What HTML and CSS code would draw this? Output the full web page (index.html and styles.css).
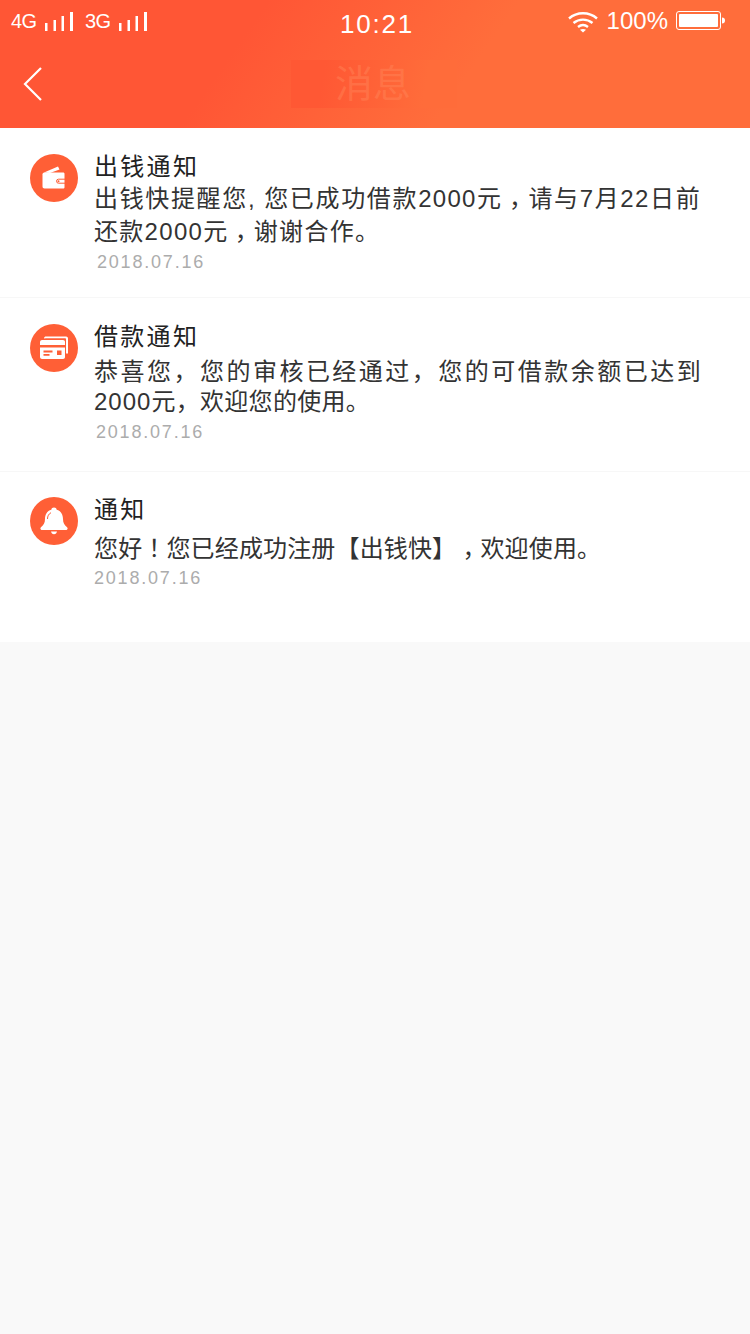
FILE: index.html
```html
<!DOCTYPE html>
<html lang="zh">
<head>
<meta charset="utf-8">
<title>消息</title>
<link rel="stylesheet" href="styles.css">
</head>
<body>
<header class="header">
  <div class="status">
    <div class="status-left">
      <span class="net net-4g">4G</span>
      <svg class="bars" width="30" height="20" viewBox="0 0 30 20"><path d="M1 12h2.500v8H1zM9.500 9H12v11H9.500zM17.500 5H20v15h-2.500zM26 1h3v19h-3z" fill="#fff"/></svg>
      <span class="net net-3g">3G</span>
      <svg class="bars" width="30" height="20" viewBox="0 0 30 20"><path d="M1 12h2.500v8H1zM9.500 9H12v11H9.500zM17.500 5H20v15h-2.500zM26 1h3v19h-3z" fill="#fff"/></svg>
    </div>
    <div class="clock">10:21</div>
    <div class="status-right">
      <svg class="wifi" width="30" height="22" viewBox="0 0 30 22" fill="none" stroke="#fff" stroke-width="2.400"><path d="M1 7.500C9 .5 21 .5 29 7.500"/><path d="M5.500 12C11 7.500 19 7.500 24.500 12"/><path d="M10 16c3-2.300 7-2.300 10 0"/><path d="M12 18.800 15 21.500l3-2.700c-1.800-1-4.200-1-6 0z" fill="#fff" stroke="none"/></svg>
      <span class="pct">100%</span>
      <svg class="batt" width="50" height="22" viewBox="0 0 50 22"><rect x=".5" y="1.500" width="44" height="18" rx="2.500" fill="none" stroke="#fff"/><rect x="3" y="4" width="39" height="13" rx="1" fill="#fff"/><path d="M46 7.500c2 0 3 1 3 3s-1 3-3 3z" fill="#fff"/></svg>
    </div>
  </div>
  <div class="nav">
    <svg class="back" width="22" height="36" viewBox="0 0 22 36" fill="none" stroke="#fff" stroke-width="2.200"><path d="M19 2 3 18l16 16"/></svg>
    <div class="ghost"><span class="ghost-text">消息</span></div>
  </div>
</header>

<main class="list">
  <article class="item item-one">
    <div class="icon">
      <svg width="26" height="26" viewBox="0 0 26 26"><path d="M3 7.500 17 1.500l1.500 3L9 8z" fill="#fff"/><path d="M1.500 9.500C1.500 8 2.500 7.500 4 7.500h18c1 0 1.500.5 1.500 1.500v13c0 1-.5 1.500-1.500 1.500H3.500c-1.200 0-2-.8-2-2z" fill="#fff"/><path d="M24 14.200h-6.500a2 2 0 0 0 0 4H24" fill="none" stroke="#ff5f36" stroke-width="1"/><circle cx="17.500" cy="16.200" r="1" fill="#ff5f36"/></svg>
    </div>
    <div class="body">
      <h2 class="title">出钱通知</h2>
      <p class="text">出钱快提醒您, 您已成功借款2000元<span class="punct comma" lang="zh-TW">，</span>请与7月22日前还款2000元<span class="punct comma" lang="zh-TW">，</span>谢谢合作。</p>
      <time class="date">2018.07.16</time>
    </div>
  </article>
  <article class="item item-two">
    <div class="icon">
      <svg width="30" height="26" viewBox="0 0 30 26"><path d="M5 3.500C5 2 6 1.500 7 1.500h20c1.500 0 2 1 2 2v15h-2V4c0-.5-.3-.7-.7-.7H7z" fill="#fff"/><path d="M1 7c0-1.200 1-2 2-2h21c1.200 0 2 .8 2 2v3H1z" fill="#fff"/><path d="M1 12.500h25V22c0 1.200-.8 2-2 2H3c-1 0-2-.8-2-2z" fill="#fff"/><path d="M4.500 15.500h9v2h-9zM4.500 19h6v1.800h-6z" fill="#ff5f36"/><rect x="18" y="15.500" width="4.500" height="4.500" fill="#ff5f36"/></svg>
    </div>
    <div class="body">
      <h2 class="title">借款通知</h2>
      <p class="text">恭喜您，您的审核已经通过，您的可借款余额已达到<span class="num">2000</span>元，欢迎您的使用。</p>
      <time class="date">2018.07.16</time>
    </div>
  </article>
  <article class="item item-three">
    <div class="icon">
      <svg width="30" height="30" viewBox="0 0 30 30"><path d="M15 1.500c1.500 0 2.500.8 2.700 2.200C22 5 24 8.500 24 13c0 4 1.500 6.300 3.800 8 1.400 1 1 3-1 3H3.200c-2 0-2.400-2-1-3C4.500 19.300 6 17 6 13c0-4.500 2-8 6.300-9.300.2-1.400 1.200-2.200 2.700-2.200z" fill="#fff"/><path d="M12 25.500h6c-.3 1.600-1.400 2.700-3 2.700s-2.700-1.100-3-2.700z" fill="#fff"/><path d="M8.500 13c0-3 1.200-5 3.500-6.300" fill="none" stroke="#ff5f36" stroke-width="1"/></svg>
    </div>
    <div class="body">
      <h2 class="title">通知</h2>
      <p class="text">您好<span class="punct" lang="zh-TW">！</span>您已经成功注册【出钱快】<span class="punct comma" lang="zh-TW">，</span>欢迎使用。</p>
      <time class="date">2018.07.16</time>
    </div>
  </article>
</main>
</body>
</html>
```
FILE: styles.css
```css
* { box-sizing: border-box; }
html, body { margin: 0; padding: 0; }
body {
  width: 750px;
  height: 1334px;
  overflow: hidden;
  background: #f9f9f9;
  font-family: "Liberation Sans", "Noto Sans CJK SC", sans-serif;
}
.header {
  height: 128px;
  color: #fff;
  background: linear-gradient(125deg, #ff5635 32%, #ff6d3b 62%);
}
.status {
  height: 42px;
  padding: 8px 24px 0 11px;
  display: grid;
  grid-template-columns: 1fr auto 1fr;
  align-items: start;
}
.status-left { display: flex; align-items: flex-start; height: 26px; }
.net { font-size: 20px; line-height: 26px; letter-spacing: -0.5px; }
.net-4g { width: 33px; }
.net-3g { width: 33px; margin-left: 11px; }
.bars { margin-top: 3px; }
.clock { margin-left: 17px; font-size: 26px; line-height: 32px; letter-spacing: 1.8px; }
.status-right { display: flex; justify-content: flex-end; align-items: flex-start; gap: 9px; height: 26px; }
.wifi { margin-top: 3px; }
.pct { font-size: 24px; line-height: 26px; }
.batt { margin: 2px 0 0 -1px; }
.nav { height: 86px; padding: 0 0 0 22px; display: flex; align-items: center; justify-content: flex-start; position: relative; }
.back { margin-top: -3px; }
.ghost {
  position: absolute;
  left: 291px;
  top: 18px;
  width: 166px;
  height: 48px;
  padding-left: 44px;
  background: linear-gradient(100deg, #ff5834 20%, #ff6c3a 80%);
}
.ghost-text {
  font-size: 38px;
  line-height: 48px;
  color: rgba(255, 140, 95, 0.38);
  font-weight: 400;
}
.list { background: #fff; height: 514px; }
.item { display: flex; padding-left: 30px; border-bottom: 1px solid #f7f7f7; }
.item-one { height: 170px; padding-top: 26px; }
.item-two { height: 174px; padding-top: 26px; }
.item-three { height: 170px; padding-top: 25px; border-bottom: 0; }
.icon {
  flex: none;
  width: 48px;
  height: 48px;
  border-radius: 50%;
  background: #ff5f36;
  display: flex;
  align-items: center;
  justify-content: center;
}
.body { margin-left: 16px; width: 607px; }
.title { margin: 0; font-size: 24px; line-height: 26px; font-weight: 400; letter-spacing: 2.3px; color: #222; }
.text { margin: 0; font-size: 24px; color: #333; text-align: justify; text-spacing-trim: space-all; }
.punct { font-family: "Noto Sans CJK TC", sans-serif; line-height: 0; }
.comma { vertical-align: -7px; }
.num { letter-spacing: 1px; }
.date { display: block; font-size: 18px; line-height: 22px; letter-spacing: 1.8px; color: #acacac; }

.item-one .text { margin-top: 2px; line-height: 33px; letter-spacing: 1.3px; }
.item-one .date { margin-top: 3px; padding-left: 3px; }

.item-two .text { margin-top: 7px; line-height: 30px; letter-spacing: 0.3px; }
.item-two .date { margin-top: 4px; padding-left: 2px; }

.item-three .text { margin-top: 9px; line-height: 33px; letter-spacing: 0.15px; }
.item-three .date { margin-top: 2px; }
```
